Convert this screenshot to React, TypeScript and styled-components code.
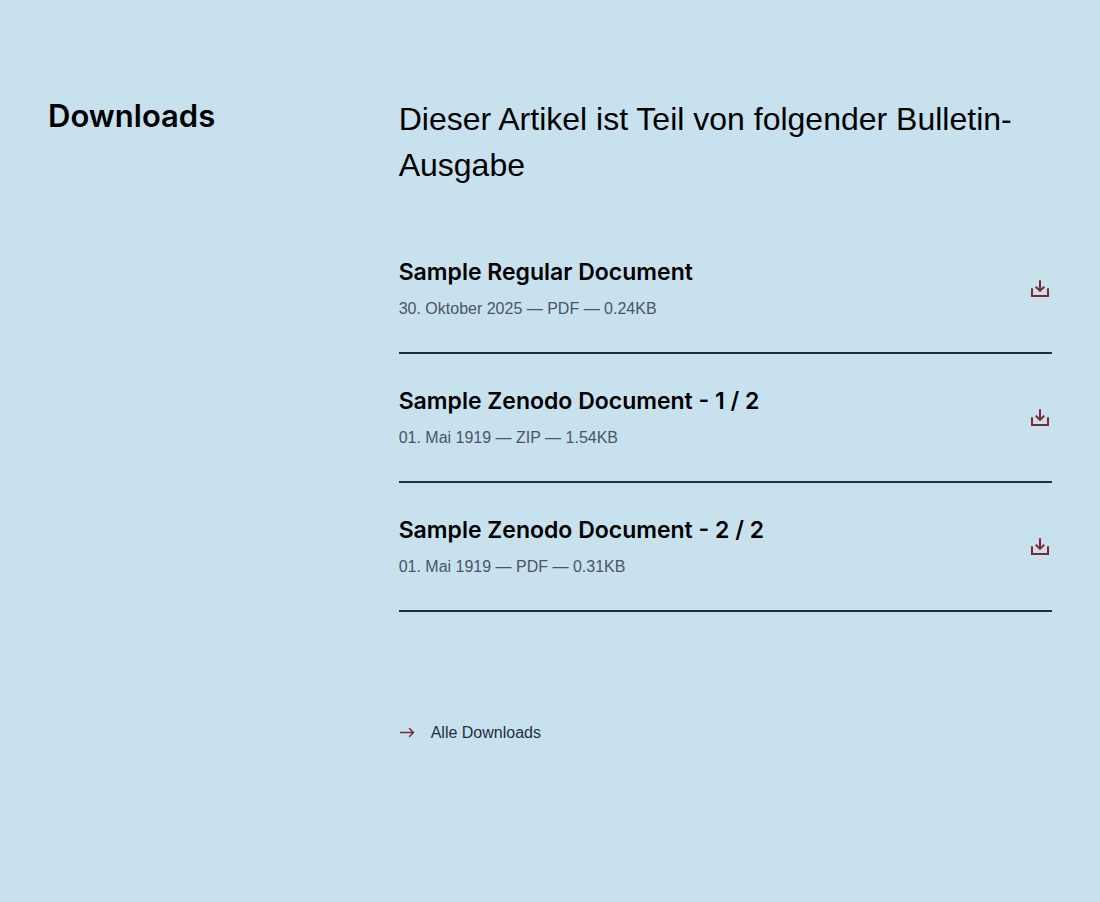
import React from "react";
import styled, { createGlobalStyle } from "styled-components";

const Global = createGlobalStyle`
  *, *::before, *::after { box-sizing: border-box; }
  body { margin: 0; background: #c8e1ef; color: #000; font-family: "Liberation Sans", Arial, sans-serif; }
`;
const Section = styled.section`
  display: grid;
  grid-template-columns: minmax(0, 1fr) minmax(0, 2fr);
  column-gap: 24px;
  padding: 96px 48px 158px;
`;
const Heading = styled.h2`
  margin: 0;
  font: 600 31px/40px Inter, sans-serif;
`;
const Intro = styled.p`
  margin: 0 0 37px;
  font-size: 32px;
  line-height: 46px;
`;
const List = styled.ul`
  margin: 0 0 109px;
  padding: 0;
  list-style: none;
`;
const Item = styled.li`
  border-bottom: 2px solid #1f2f40;
`;
const Download = styled.a`
  display: flex;
  align-items: center;
  justify-content: space-between;
  padding: 31px 2px 31px 0;
  color: inherit;
  text-decoration: none;
`;
const Title = styled.h3`
  margin: 0 0 9px;
  font: 600 23px/32px Inter, sans-serif;
`;
const Meta = styled.p`
  margin: 0;
  font-size: 16px;
  line-height: 24px;
  color: #4a5565;
`;
const More = styled.a`
  display: inline-flex;
  align-items: center;
  gap: 16px;
  font-size: 16px;
  line-height: 24px;
  color: #1f2f40;
  text-decoration: none;
`;

const docs = [
  { title: "Sample Regular Document", meta: "30. Oktober 2025 — PDF — 0.24KB" },
  { title: "Sample Zenodo Document - 1 / 2", meta: "01. Mai 1919 — ZIP — 1.54KB" },
  { title: "Sample Zenodo Document - 2 / 2", meta: "01. Mai 1919 — PDF — 0.31KB" },
];

const DownloadIcon = () => (
  <svg width="20" height="20" viewBox="0 0 20 20" fill="none" stroke="#822630" strokeWidth="2" strokeLinecap="round" aria-hidden="true">
    <path d="M2 10v7h16v-7M10 2v9.5M6.3 8.2l3.7 3.7 3.7-3.7" />
  </svg>
);
const ArrowIcon = () => (
  <svg width="16" height="16" viewBox="0 0 16 16" fill="none" stroke="#822630" strokeWidth="1.5" strokeLinecap="round" strokeLinejoin="round" aria-hidden="true">
    <path d="M1.5 7.5h13M10.5 3.5l4 4-4 4" />
  </svg>
);

export default function App() {
  return (
    <>
      <Global />
      <Section>
        <Heading>Downloads</Heading>
        <div>
          <Intro>Dieser Artikel ist Teil von folgender Bulletin-Ausgabe</Intro>
          <List>
            {docs.map((d) => (
              <Item key={d.title}>
                <Download href="#">
                  <div>
                    <Title>{d.title}</Title>
                    <Meta>{d.meta}</Meta>
                  </div>
                  <DownloadIcon />
                </Download>
              </Item>
            ))}
          </List>
          <More href="#"><ArrowIcon />Alle Downloads</More>
        </div>
      </Section>
    </>
  );
}
